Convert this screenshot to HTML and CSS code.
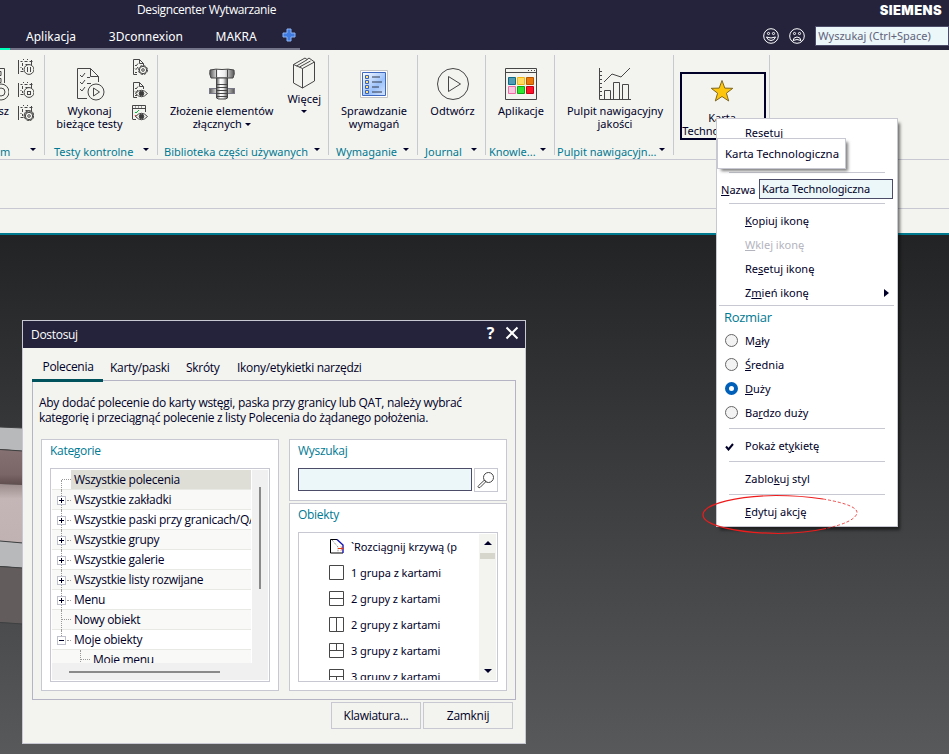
FILE: index.html
```
<!DOCTYPE html>
<html lang="pl">
<head>
  <meta charset="UTF-8" />
  <meta name="viewport" content="width=device-width, initial-scale=1.0" />
  <title>Designcenter Wytwarzanie</title>
  <link rel="stylesheet" href="styles.css">
</head>

<body>

<!-- Shared icon parts -->
<svg class="symbols" width="0" height="0">
  <symbol id="chip" viewBox="0 0 16 16">
    <path d="M.5 1v14M2.500 2.500h2M6.500 2.500h3M11.500 2.500h3M13.500 1v5M4.500 4v3M7.500 5.500h4M2.500 8.500h1M4.500 9v2M2.500 12.500h3M5.500 0v1M9.500 0v1" />
    <circle cx="11" cy="10.500" r="4.900" fill="#f3f4ef" />
  </symbol>
  <symbol id="doc" viewBox="0 0 16 16">
    <path d="M5 15.500H1.500V.5h6l4 4V7M7.500.5v4h4M3 6l1 1 2-2.500M3 9.500l1 1 2-2.500M3 13l1 1 1-1" />
  </symbol>
  <symbol id="eye" viewBox="0 0 16 16">
    <path d="M3.500 11.500q6-6.500 12 0q-6 6.500-12 0z" fill="#f3f4ef" />
    <circle cx="9.500" cy="11.500" r="2.300" fill="#3a3a3a" />
  </symbol>
  <symbol id="gear" viewBox="0 0 16 16">
    <circle cx="11" cy="11" r="4.500" fill="#f3f4ef" stroke-dasharray="2.500 1" />
    <circle cx="11" cy="11" r="3.700" />
    <circle cx="11" cy="11" r="1.300" />
  </symbol>
</svg>

<!-- Title bar and ribbon tabs -->
<header class="app-header">
  <div class="title-row">
    <span class="app-title">Designcenter Wytwarzanie</span>
    <span class="brand">SIEMENS</span>
  </div>
  <nav class="tab-row">
    <span class="tab tab-app">Aplikacja</span>
    <span class="tab tab-3d">3Dconnexion</span>
    <span class="tab tab-makra">MAKRA</span>
    <svg class="plus" width="14" height="14" viewBox="0 0 14 14"><path d="M5 1h4v4h4v4H9v4H5V9H1V5h4z" fill="#3f7be0" stroke="#8db5f5" /></svg>
    <svg class="face" width="16" height="16" viewBox="0 0 16 16"><circle cx="8" cy="8" r="7.300" /><circle cx="5.500" cy="5.500" r="1.100" /><circle cx="10.500" cy="5.500" r="1.100" /><path d="M3.500 9q1 3.500 4.500 3.500T12.500 9q-4.500 2-9 0z" /></svg>
    <svg class="face" width="16" height="16" viewBox="0 0 16 16"><circle cx="8" cy="8" r="7.300" /><circle cx="5.500" cy="5.500" r="1.100" /><circle cx="10.500" cy="5.500" r="1.100" /><path d="M4 12.500q.5-3.500 4-3.500t4 3.500q-4-2-8 0z" /></svg>
    <div class="cmd-search">Wyszukaj (Ctrl+Space)</div>
  </nav>
  <div class="tab-line"><span class="tab-line-active"></span></div>
</header>

<!-- Ribbon -->
<section class="ribbon">
  <div class="group g-program">
    <div class="group-body">
      <div class="command cmd-cut">
        <svg class="icon" width="32" height="34" viewBox="0 0 32 34"><path d="M12 1.500h15.500V16M18 4.500h6v4h-6zM18 11.500h6v4h-6z" /><circle cx="24" cy="25" r="8" fill="#f3f4ef" /><circle cx="24" cy="25" r="4" /></svg>
        <span>sz</span>
      </div>
      <div class="small-icons">
        <svg class="icon" width="16" height="16"><use href="#chip" /><path d="M9.500 8v5M12.500 8v5" /></svg>
        <svg class="icon" width="16" height="16"><use href="#chip" /><rect x="9.500" y="9.500" width="3" height="3" /></svg>
        <svg class="icon" width="16" height="16"><use href="#chip" /><use href="#gear" /></svg>
      </div>
    </div>
    <div class="group-foot"><span>m</span><i class="arrow"></i></div>
  </div>

  <div class="group g-tests">
    <div class="group-body">
      <div class="command">
        <svg class="icon" width="32" height="34" viewBox="0 0 32 34"><path d="M14 31.500H4.500V1.500h13l8 8V15M17.500 1.500v8h8M7 8l2 2 3-4M7 15l2 2 3-4M7 22l2 2 3-4M14 10.500h3M14 16.500h4" /><circle cx="23" cy="25" r="8" fill="#f3f4ef" /><path d="M20.500 21v8l6-4z" /></svg>
        <span>Wykonaj</span><span>bieżące testy</span>
      </div>
      <div class="small-icons">
        <svg class="icon" width="16" height="16"><use href="#doc" /><use href="#gear" /></svg>
        <svg class="icon" width="16" height="16"><use href="#doc" /><use href="#eye" /></svg>
        <svg class="icon" width="16" height="16"><path d="M.5 14V.5h13V7M.5 3.500h13M4 14.500H.5M3 2h1M6 2h1M9 2h1" /><path d="M3 7l1 1 3-3" stroke="#0b3" /><path d="M3 10l2 3" stroke="#e22" /><use href="#eye" /></svg>
      </div>
    </div>
    <div class="group-foot"><span>Testy kontrolne</span><i class="arrow"></i></div>
  </div>

  <div class="group g-library">
    <div class="group-body">
      <div class="command cmd-bolt">
        <svg class="icon" width="32" height="34" viewBox="0 0 32 34">
          <defs><linearGradient id="steel"><stop offset="0" stop-color="#555" /><stop offset=".35" stop-color="#fff" /><stop offset=".6" stop-color="#eee" /><stop offset="1" stop-color="#555" /></linearGradient></defs>
          <path d="M4 3q6-1.500 12-.5 6-1 12 .5 1 4-1 8H5Q3 7 4 3z" fill="url(#steel)" />
          <path d="M10.500 2.500v8M21.500 2.500v8" />
          <rect x="3.500" y="21.500" width="25" height="5" fill="url(#steel)" stroke="#778" />
          <path d="M10.500 11h11v20l-2 1h-7l-2-1z" fill="url(#steel)" />
          <path d="M10 17.500h12M10 20.500h12M10 23.500h12M10 26.500h12M10 29.500h12" />
        </svg>
        <span>Złożenie elementów</span><span class="with-arrow">złącznych <i class="arrow"></i></span>
      </div>
      <div class="command cmd-more">
        <svg class="icon" width="24" height="32" viewBox="0 0 24 32"><path d="M1.500 7.500L13 1l2 1.500L17 1l5.500 4v19L10.500 31l-9-5zM1.500 7.500l9 4L22.500 5M10.500 11.500V31M4.500 9l11-6.500M7.500 10l11-6" /></svg>
        <span>Więcej</span><i class="arrow"></i>
      </div>
    </div>
    <div class="group-foot"><span>Biblioteka części używanych</span><i class="arrow"></i></div>
  </div>

  <div class="group g-req">
    <div class="group-body">
      <div class="command">
        <svg class="icon" width="32" height="34" viewBox="0 0 32 34">
          <defs><linearGradient id="sheet" x2="1" y2="1"><stop offset="0" stop-color="#fff" /><stop offset=".6" stop-color="#9cc2fb" /><stop offset="1" stop-color="#d5e5ff" /></linearGradient></defs>
          <path d="M2.500 3.500h27v27h-27z" fill="#fff" stroke="#c4c4c4" />
          <path d="M4.500 5.500h23v23h-23z" fill="url(#sheet)" stroke="#3d68bd" />
          <path d="M7.500 8.500h3v3h-3zM7.500 13.500h3v3h-3zM7.500 18.500h3v3h-3zM7.500 23.500h3v3h-3z" fill="#ffe07a" stroke="#3862bb" />
          <path d="M14 10h8M14 15h10M14 20h7M14 25h10" stroke="#333b4d" />
        </svg>
        <span>Sprawdzanie</span><span>wymagań</span>
      </div>
    </div>
    <div class="group-foot"><span>Wymaganie</span><i class="arrow"></i></div>
  </div>

  <div class="group g-journal">
    <div class="group-body">
      <div class="command">
        <svg class="icon" width="32" height="34" viewBox="0 0 32 34"><circle cx="16" cy="17" r="15.500" /><path d="M11.500 9.500v15L23.500 17z" /></svg>
        <span>Odtwórz</span>
      </div>
    </div>
    <div class="group-foot"><span>Journal</span><i class="arrow"></i></div>
  </div>

  <div class="group g-know">
    <div class="group-body">
      <div class="command">
        <svg class="icon" width="32" height="34" viewBox="0 0 32 34">
          <path d="M.5 1.500h31v31H.5zM.5 5.500h31M23 3.500h1M26 3.500h1M29 3.500h1" />
          <path d="M3.500 10.500h7v7h-7z" fill="#529bb2" stroke="#0c6b87" />
          <path d="M12.500 10.500h7v7h-7z" fill="#ffdc5e" stroke="#f3b40b" />
          <path d="M21.500 10.500h7v7h-7z" fill="#eb780a" stroke="#b75400" />
          <path d="M3.500 19.500h7v7h-7z" fill="#f8c8de" stroke="#ef6ba5" />
          <path d="M12.500 19.500h7v7h-7z" fill="#2be52f" stroke="#0ea414" />
          <path d="M21.500 19.500h7v7h-7z" fill="#ff1028" stroke="#c00018" />
        </svg>
        <span>Aplikacje</span>
      </div>
    </div>
    <div class="group-foot"><span>Knowle...</span><i class="arrow"></i></div>
  </div>

  <div class="group g-dash">
    <div class="group-body">
      <div class="command">
        <svg class="icon" width="32" height="34" viewBox="0 0 32 34"><path d="M.5 1v31.500H32M.5 4.500H3M.5 8.500H3M.5 12.500H3M.5 16.500H3M.5 20.500H3M.5 24.500H3M.5 28.500H3M5.500 32v-8.500h6V32M14.500 32V15.500h6V32M23.500 32V17.500h6V32M5 15l8-8 9 3L31 1" /></svg>
        <span>Pulpit nawigacyjny</span><span>jakości</span>
      </div>
    </div>
    <div class="group-foot"><span>Pulpit nawigacyjn...</span><i class="arrow"></i></div>
  </div>

  <div class="group g-card">
    <div class="card-command">
      <svg width="24" height="24" viewBox="0 0 24 24"><path d="M12 1.500l2.800 7.600 8 .2-6.400 4.900 2.300 7.800-6.700-4.500L5.300 22l2.300-7.800L1.200 9.300l8-.2z" fill="#fdc50b" stroke="#80681f" /></svg>
      <span>Karta</span><span>Technologiczna</span>
    </div>
  </div>
</section>

<div class="border-bar"></div>
<div class="cue-bar"></div>

<!-- Graphics window -->
<main class="viewport">
  <svg class="part" width="23" height="220" viewBox="0 0 23 220">
    <defs>
      <linearGradient id="shaft" x2="0" y2="1"><stop offset="0" stop-color="#857172" /><stop offset=".7" stop-color="#7a6667" /><stop offset="1" stop-color="#5f4c4c" /></linearGradient>
      <linearGradient id="shaft2" x2="0" y2="1"><stop offset="0" stop-color="#9c8c8c" /><stop offset=".25" stop-color="#c4b6b6" /><stop offset="1" stop-color="#c0b2b2" /></linearGradient>
    </defs>
    <path d="M0 12l23 1v23l-23-2z" fill="#b8b9bb" />
    <path d="M0 34l23 2v34l-23-1z" fill="url(#shaft)" />
    <path d="M0 69l23 1v58l-23-2z" fill="url(#shaft2)" />
    <path d="M0 126l23 2v25l-23-2z" fill="#b8b9bb" />
    <path d="M0 151l23 2v56l-23-2z" fill="#625c5d" />
    <path d="M0 12l23 1M0 34.500l23 1.500M0 126l23 2M0 151.500l23 1.500M0 207.500l23 1.500" fill="none" stroke="#3e4041" />
  </svg>
</main>

<!-- Customize dialog -->
<div class="dialog">
  <div class="dialog-title">
    <span>Dostosuj</span>
    <b class="help">?</b>
    <svg width="14" height="14" viewBox="0 0 14 14"><path d="M1.500 1.500l11 11M12.500 1.500l-11 11" stroke="#fff" stroke-width="2" /></svg>
  </div>
  <div class="dialog-tabs">
    <span class="dtab active">Polecenia</span>
    <span class="dtab t-cards">Karty/paski</span>
    <span class="dtab t-keys">Skróty</span>
    <span class="dtab t-icons">Ikony/etykietki narzędzi</span>
  </div>
  <div class="dialog-page">
    <p class="hint"><span class="hint-1">Aby dodać polecenie do karty wstęgi, paska przy granicy lub QAT, należy wybrać</span><span class="hint-2">kategorię i przeciągnąć polecenie z listy Polecenia do żądanego położenia.</span></p>
    <div class="columns">
      <div class="box box-categories">
        <h3>Kategorie</h3>
        <div class="tree">
          <div class="tree-rows">
            <div class="node selected first"><i class="leaf"></i><span>Wszystkie polecenia</span></div>
            <div class="node"><i class="toggle"></i><span>Wszystkie zakładki</span></div>
            <div class="node"><i class="toggle"></i><span>Wszystkie paski przy granicach/QAT</span></div>
            <div class="node"><i class="toggle"></i><span>Wszystkie grupy</span></div>
            <div class="node"><i class="toggle"></i><span>Wszystkie galerie</span></div>
            <div class="node"><i class="toggle"></i><span>Wszystkie listy rozwijane</span></div>
            <div class="node"><i class="toggle"></i><span>Menu</span></div>
            <div class="node"><i class="leaf"></i><span>Nowy obiekt</span></div>
            <div class="node last"><i class="toggle open"></i><span>Moje obiekty</span></div>
            <div class="node child"><i class="leaf"></i><span>Moje menu</span></div>
          </div>
          <div class="vscroll"></div>
          <div class="hscroll"></div>
        </div>
      </div>
      <div class="right-column">
        <div class="box box-search">
          <h3>Wyszukaj</h3>
          <div class="search-line">
            <div class="search-input"></div>
            <div class="search-button"><svg class="icon" width="18" height="18" viewBox="0 0 18 18"><circle cx="11.500" cy="6.500" r="5" /><path d="M7.500 9l1.500 1.500-6 6q-1 .5-1.700-.2T1.500 14.700z" /></svg></div>
          </div>
        </div>
        <div class="box box-objects">
          <h3>Obiekty</h3>
          <div class="object-list">
            <div class="objects">
              <div class="object"><svg width="15" height="15" viewBox="0 0 15 15" fill="none"><path d="M8 .5H1.500v13.500H14" stroke="#000" /><path d="M8 .5l6 5.500v8" stroke="#1414b4" stroke-width="1.400" /><path d="M3 1l6 7v6" stroke="#777" stroke-dasharray="1 1" /><path d="M9 9.500h5M12 7.500l2 2-2 2" stroke="#e03c14" /></svg><span>`Rozciągnij krzywą (p</span></div>
              <div class="object"><svg class="icon" width="15" height="15"><path d="M.5.5h14v14H.5z" /></svg><span>1 grupa z kartami</span></div>
              <div class="object"><svg class="icon" width="15" height="15"><path d="M.5.5h14v14H.5zM.5 7.500h14" /></svg><span>2 grupy z kartami</span></div>
              <div class="object"><svg class="icon" width="15" height="15"><path d="M.5.5h14v14H.5zM7.500.5v14" /></svg><span>2 grupy z kartami</span></div>
              <div class="object"><svg class="icon" width="15" height="15"><path d="M.5.5h14v14H.5zM.5 7.500h14M7.500.5v7" /></svg><span>3 grupy z kartami</span></div>
              <div class="object"><svg class="icon" width="15" height="15"><path d="M.5.5h14v14H.5zM.5 7.500h14M7.500 7.500v7" /></svg><span>3 grupy z kartami</span></div>
            </div>
            <div class="list-scroll"><i class="arrow up"></i><i class="thumb"></i><i class="arrow down"></i></div>
          </div>
        </div>
      </div>
    </div>
  </div>
  <div class="dialog-buttons">
    <button class="btn">Klawiatura...</button>
    <button class="btn">Zamknij</button>
  </div>
</div>

<!-- Context menu of the command -->
<div class="menu">
  <div class="item item-reset">Resetuj</div>
  <div class="sep"></div>
  <div class="name-row"><span><u>N</u>azwa</span><div class="name-input">Karta Technologiczna</div></div>
  <div class="sep"></div>
  <div class="item"><u>K</u>opiuj ikonę</div>
  <div class="item disabled"><u>W</u>klej ikonę</div>
  <div class="item">Re<u>s</u>etuj ikonę</div>
  <div class="item submenu"><span>Z<u>m</u>ień ikonę</span><i class="arrow-right"></i></div>
  <div class="menu-head">Rozmiar</div>
  <div class="item"><i class="radio"></i>M<u>a</u>ły</div>
  <div class="item"><i class="radio"></i><u>Ś</u>rednia</div>
  <div class="item"><i class="radio checked"></i><u>D</u>uży</div>
  <div class="item"><i class="radio"></i>Ba<u>r</u>dzo duży</div>
  <div class="sep"></div>
  <div class="item"><svg class="check" width="9" height="8" viewBox="0 0 9 8"><path d="M1 3.500l2.500 3L8 1" /></svg>Pokaż et<u>y</u>kietę</div>
  <div class="sep"></div>
  <div class="item">Zablo<u>k</u>uj styl</div>
  <div class="sep"></div>
  <div class="item"><u>E</u>dytuj akcję</div>
</div>

<div class="tooltip">Karta Technologiczna</div>

<!-- Hand drawn mark around "Edytuj akcję" -->
<svg class="mark" width="160" height="42" viewBox="0 0 160 42">
  <path d="M123 5Q100 1.500 76 1.500C40 2 4 9 3 20.500S40 39 78 39.500q28-.5 48-5" stroke-width="1.200" />
  <path d="M123 5q35 6 34 14-2 9-31 15.500" stroke-width=".8" stroke-dasharray="3 2" />
</svg>

</body>
</html>
```
FILE: styles.css
```
/* =========================
   General Page Styling
   ========================= */
* {
  box-sizing: border-box;
}

body {
  margin: 0;
  width: 949px;
  height: 754px;
  overflow: hidden;
  display: flex;
  flex-direction: column;
  position: relative;
  background-color: #f3f4ef;
  color: #000028;
  font-family: "Noto Sans", "Open Sans", sans-serif;
  font-size: 11px;
  white-space: nowrap;
}

svg {
  display: block;
  flex: none;
}

.symbols {
  position: absolute;
}

.icon {
  fill: none;
  stroke: #464646;
}

.arrow {
  display: inline-block;
  border: 3px solid transparent;
  border-top-color: #000028;
  border-bottom: none;
}

/* =========================
   Header
   ========================= */
.app-header {
  height: 50px;
  background-color: #24233b;
  color: #fff;
}

.title-row {
  display: flex;
  justify-content: space-between;
  height: 21px;
  line-height: 19px;
  padding: 0 7px 0 137px;
}

.app-title {
  font-family: "Open Sans", sans-serif;
  font-size: 12px;
  letter-spacing: -0.4px;
}

.brand {
  font-family: Inter, sans-serif;
  font-weight: 900;
  font-size: 13px;
  letter-spacing: 0.4px;
  line-height: 21px;
}

.tab-row {
  display: flex;
  align-items: center;
  height: 27px;
  padding: 3px 0 0 26px;
  font-size: 12px;
  line-height: 30px;
}

.tab {
  padding-top: 1px;
}

.tab-app { width: 83px; }
.tab-3d { width: 107px; }
.tab-makra { width: 67px; }

.plus {
  margin: 0 467px 2px 0;
}

.face {
  fill: none;
  stroke: #fff;
  margin-right: 10px;
}

.cmd-search {
  width: 134px;
  height: 20px;
  margin-bottom: 1px;
  padding-left: 2px;
  line-height: 18px;
  font-size: 11px;
  color: #62627c;
  background-color: #ebf7f8;
  border: 1px solid #4c4c68;
}

.tab-line {
  width: 300px;
  height: 2px;
  background-color: #737389;
}

.tab-line-active {
  display: block;
  width: 10px;
  height: 2px;
  background-color: #00ffb9;
}

/* =========================
   Ribbon
   ========================= */
.ribbon {
  display: flex;
  height: 110px;
  padding-top: 5px;
  border-bottom: 1px solid #c8c8d2;
}

.group {
  display: flex;
  flex-direction: column;
  height: 100px;
  border-right: 1px solid #c8c8d2;
  flex: none;
}

.g-program { width: 45px; }
.g-tests { width: 113px; }
.g-library { width: 171px; }
.g-req { width: 89px; }
.g-journal { width: 68px; }
.g-know { width: 69px; }
.g-dash { width: 119px; }
.g-card { width: 96px; }

.group-body {
  display: flex;
  flex: none;
  justify-content: center;
  height: 89px;
  padding-left: 2px;
}

.command {
  display: flex;
  flex-direction: column;
  align-items: center;
  padding-top: 12px;
  line-height: 13px;
}

.command .icon {
  margin-bottom: 3px;
}

.cmd-cut {
  width: 18px;
  align-items: flex-end;
  padding-right: 9px;
}

.cmd-bolt {
  margin-left: 3px;
}

.cmd-more {
  padding-top: 2px;
  margin-left: 14px;
}

.cmd-more .arrow {
  margin-top: 5px;
}

.with-arrow .arrow {
  vertical-align: 2px;
}

.small-icons {
  display: flex;
  flex-direction: column;
  gap: 7px;
  padding-top: 4px;
}

.g-program .group-body {
  justify-content: flex-start;
  padding-left: 0;
}

.g-tests .small-icons { margin-left: 9px; }

.group-foot {
  display: flex;
  flex: none;
  justify-content: space-between;
  align-items: center;
  height: 15px;
  line-height: 15px;
  padding: 0 8px 0 9px;
  color: #007993;
}

.group-foot .arrow {
  margin-top: -4px;
}

.g-program .group-foot { padding-left: 0; }
.g-library .group-foot { padding-left: 6px; }
.g-req .group-foot { padding-left: 7px; }
.g-journal .group-foot { padding-left: 7px; }
.g-know .group-foot { padding-left: 3px; }
.g-dash .group-foot { padding-left: 2px; }

.card-command {
  width: 86px;
  height: 68px;
  margin: 17px 0 0 6px;
  padding: 5px 2px 0 0;
  border: 2px solid #000028;
  display: flex;
  flex-direction: column;
  align-items: center;
  line-height: 13px;
}

.card-command svg {
  margin-bottom: 8px;
}

.border-bar {
  height: 49px;
  border-bottom: 1px solid #c8c8d2;
}

.cue-bar {
  height: 26px;
  border-bottom: 2px solid #007a8e;
}

/* =========================
   Graphics window
   ========================= */
.viewport {
  flex: 1;
  padding-top: 180px;
  background: linear-gradient(#222324, #58595b);
}

/* =========================
   Dialog
   ========================= */
.dialog {
  position: absolute;
  left: 22px;
  top: 320px;
  width: 504px;
  height: 424px;
  border: 1px solid #c8c8d2;
  background-color: #f3f4ef;
  font-family: "Open Sans", sans-serif;
  font-size: 12px;
  letter-spacing: -0.3px;
}

.dialog-title {
  display: flex;
  align-items: center;
  height: 27px;
  padding: 0 6px 0 8px;
  background-color: #24233b;
  color: #fff;
}

.help {
  margin: -4px 11px 0 auto;
  font-size: 16px;
}

.dialog-title svg {
  margin-top: -4px;
}

.dialog-tabs {
  display: flex;
  height: 34px;
  padding-left: 9px;
  line-height: 39px;
}

.active {
  position: relative;
  z-index: 1;
  width: 71px;
  height: 34px;
  padding-left: 1px;
  line-height: 38px;
  text-align: center;
  border-bottom: 3px solid #00525c;
}

.t-cards { width: 76px; margin-left: 7px; }
.t-keys { width: 51px; }

.dialog-page {
  width: 484px;
  height: 320px;
  margin: -2px 0 0 9px;
  padding: 14px 8px 0;
  border: 1px solid #b4b4c4;
}

.hint {
  margin: 0 0 14px -2px;
  line-height: 15px;
}

.hint span {
  display: block;
}

.hint-1 {
  letter-spacing: -0.28px;
}

.columns {
  display: flex;
  gap: 10px;
}

.box {
  border: 1px solid #c8c8d2;
  background-color: #fff;
  padding: 0 8px;
}

.box h3 {
  margin: 0;
  height: 28px;
  line-height: 22px;
  font-size: 12px;
  font-weight: normal;
  color: #007993;
}

.box-categories {
  width: 238px;
  height: 252px;
}

.tree {
  display: grid;
  grid-template-columns: 200px 1fr;
  grid-template-rows: 193px 1fr;
  width: 220px;
  height: 214px;
  padding: 1px;
  border: 1px solid #c8c8d2;
}

.tree-rows {
  overflow: hidden;
  padding-right: 1px;
}

.node {
  display: flex;
  align-items: center;
  position: relative;
  height: 20px;
  padding-left: 5px;
  line-height: 20px;
  border-bottom: 1px solid #e8e8e4;
}

.node:nth-child(even) {
  background-color: #f9f9f7;
}

.node span {
  flex: 1;
  height: 19px;
  padding-left: 2px;
  overflow: hidden;
}

.node.selected span {
  margin-left: -1px;
  padding-left: 3px;
  background-color: #deded6;
}

/* dotted line that joins the toggles */
.node::before {
  content: "";
  position: absolute;
  left: 9px;
  top: 0;
  height: 20px;
  border-left: 1px dotted #999;
}

.node.first::before { top: 10px; height: 10px; }
.node.last::before { height: 10px; }
.node.child::before { left: 28px; }

.leaf {
  width: 9px;
  margin: 0 1px 0 5px;
  border-top: 1px dotted #999;
}

.node.child .leaf { margin-left: 24px; }

.toggle {
  position: relative;
  width: 9px;
  height: 9px;
  margin: 1px 6px 0 0;
  border: 1px solid #c0c0cc;
  background:
    linear-gradient(#000028, #000028) center / 5px 1px no-repeat,
    linear-gradient(#000028, #000028) center / 1px 5px no-repeat #fff;
}

.toggle.open {
  background: linear-gradient(#000028, #000028) center / 5px 1px no-repeat #fff;
}

.toggle::after {
  content: "";
  position: absolute;
  left: 9px;
  top: 3px;
  width: 4px;
  border-top: 1px dotted #999;
}

.vscroll {
  background-color: #f0f0f0;
  padding: 17px 0 0 7px;
}

.vscroll::before {
  content: "";
  display: block;
  width: 2px;
  height: 102px;
  background-color: #8a8a8a;
}

.hscroll {
  grid-column: 1 / 3;
  background-color: #f0f0f0;
  padding: 8px 0 0 17px;
}

.hscroll::before {
  content: "";
  display: block;
  width: 151px;
  height: 2px;
  background-color: #8a8a8a;
}

.right-column {
  display: flex;
  flex-direction: column;
  gap: 2px;
  width: 218px;
}

.box-search { height: 62px; }
.box-objects { height: 188px; }

.search-line {
  display: flex;
  gap: 2px;
}

.search-input {
  width: 174px;
  height: 23px;
  border: 1px solid #4c4c68;
  background-color: #ebf7f8;
}

.search-button {
  width: 24px;
  height: 24px;
  padding: 2px;
  border: 1px solid #c8c8d2;
}

.object-list {
  display: flex;
  justify-content: space-between;
  width: 200px;
  height: 150px;
  padding: 1px;
  border: 1px solid #c8c8d2;
}

.objects {
  overflow: hidden;
  padding-left: 29px;
  font-family: "Noto Sans", sans-serif;
  font-size: 11px;
  letter-spacing: -0.05px;
}

.object {
  display: flex;
  align-items: center;
  gap: 7px;
  height: 26px;
}

.object:first-child {
  height: 25px;
}

.list-scroll {
  display: flex;
  flex-direction: column;
  align-items: center;
  width: 17px;
  padding: 7px 0;
  background-color: #f3f4ef;
}

.thumb {
  width: 15px;
  height: 6px;
  margin-top: 8px;
  background-color: #d6d6cc;
}

.list-scroll .arrow {
  border-width: 4px;
  border-bottom: none;
}

.list-scroll .up { transform: rotate(180deg); }
.list-scroll .down { margin-top: auto; }

.dialog-buttons {
  display: flex;
  gap: 2px;
  justify-content: flex-end;
  padding: 2px 12px 0;
}

.btn {
  width: 90px;
  height: 27px;
  padding: 0;
  border: 1px solid #c8c8d2;
  background-color: #f3f4ef;
  color: #000028;
  font: inherit;
  letter-spacing: inherit;
}

/* =========================
   Context menu
   ========================= */
.menu {
  position: absolute;
  left: 716px;
  top: 118px;
  width: 182px;
  height: 409px;
  padding: 2px 3px;
  border: 1px solid #c8c8d2;
  background-color: #fff;
  box-shadow: 3px 4px 3px -1px rgba(0, 0, 0, 0.55);
}

.item {
  position: relative;
  height: 24px;
  line-height: 24px;
  padding-left: 25px;
}

.item-reset {
  margin-bottom: 27px;
}

.disabled {
  color: #b4b4be;
}

.sep {
  height: 1px;
  margin: 3px 9px 5px;
  background-color: #c8c8d2;
}

.name-row {
  display: flex;
  align-items: center;
  height: 22px;
}

.name-row span {
  width: 39px;
  padding-left: 1px;
}

.name-input {
  width: 134px;
  height: 20px;
  line-height: 18px;
  padding-left: 2px;
  border: 1px solid #4c4c68;
  background-color: #ebf7f8;
  letter-spacing: -0.1px;
}

.submenu {
  display: flex;
  justify-content: space-between;
  align-items: center;
  padding-right: 5px;
}

.arrow-right {
  border: 4px solid transparent;
  border-left: 5px solid #000028;
  border-right: none;
}

.menu-head {
  height: 24px;
  margin-left: -1px;
  padding-left: 5px;
  border-top: 1px solid #c8c8d2;
  line-height: 23px;
  font-family: "Open Sans", sans-serif;
  font-size: 13px;
  letter-spacing: -0.3px;
  color: #007993;
}

.radio {
  position: absolute;
  left: 5px;
  top: 5px;
  width: 13px;
  height: 13px;
  border: 1px solid #666;
  border-radius: 50%;
  background-color: #f3f3f3;
}

.radio.checked {
  border: 4px solid #005fb8;
  background-color: #fff;
}

.check {
  position: absolute;
  left: 5px;
  top: 9px;
  fill: none;
  stroke: #000028;
  stroke-width: 2;
}

.tooltip {
  position: absolute;
  left: 717px;
  top: 138px;
  width: 129px;
  height: 31px;
  line-height: 30px;
  padding-left: 7px;
  border: 1px solid #c8c8d2;
  background-color: #fff;
  box-shadow: 3px 3px 3px -1px rgba(0, 0, 0, 0.5);
  font-size: 11.400px;
}

.mark {
  position: absolute;
  left: 700px;
  top: 494px;
  fill: none;
  stroke: #ee1c1c;
}
```
